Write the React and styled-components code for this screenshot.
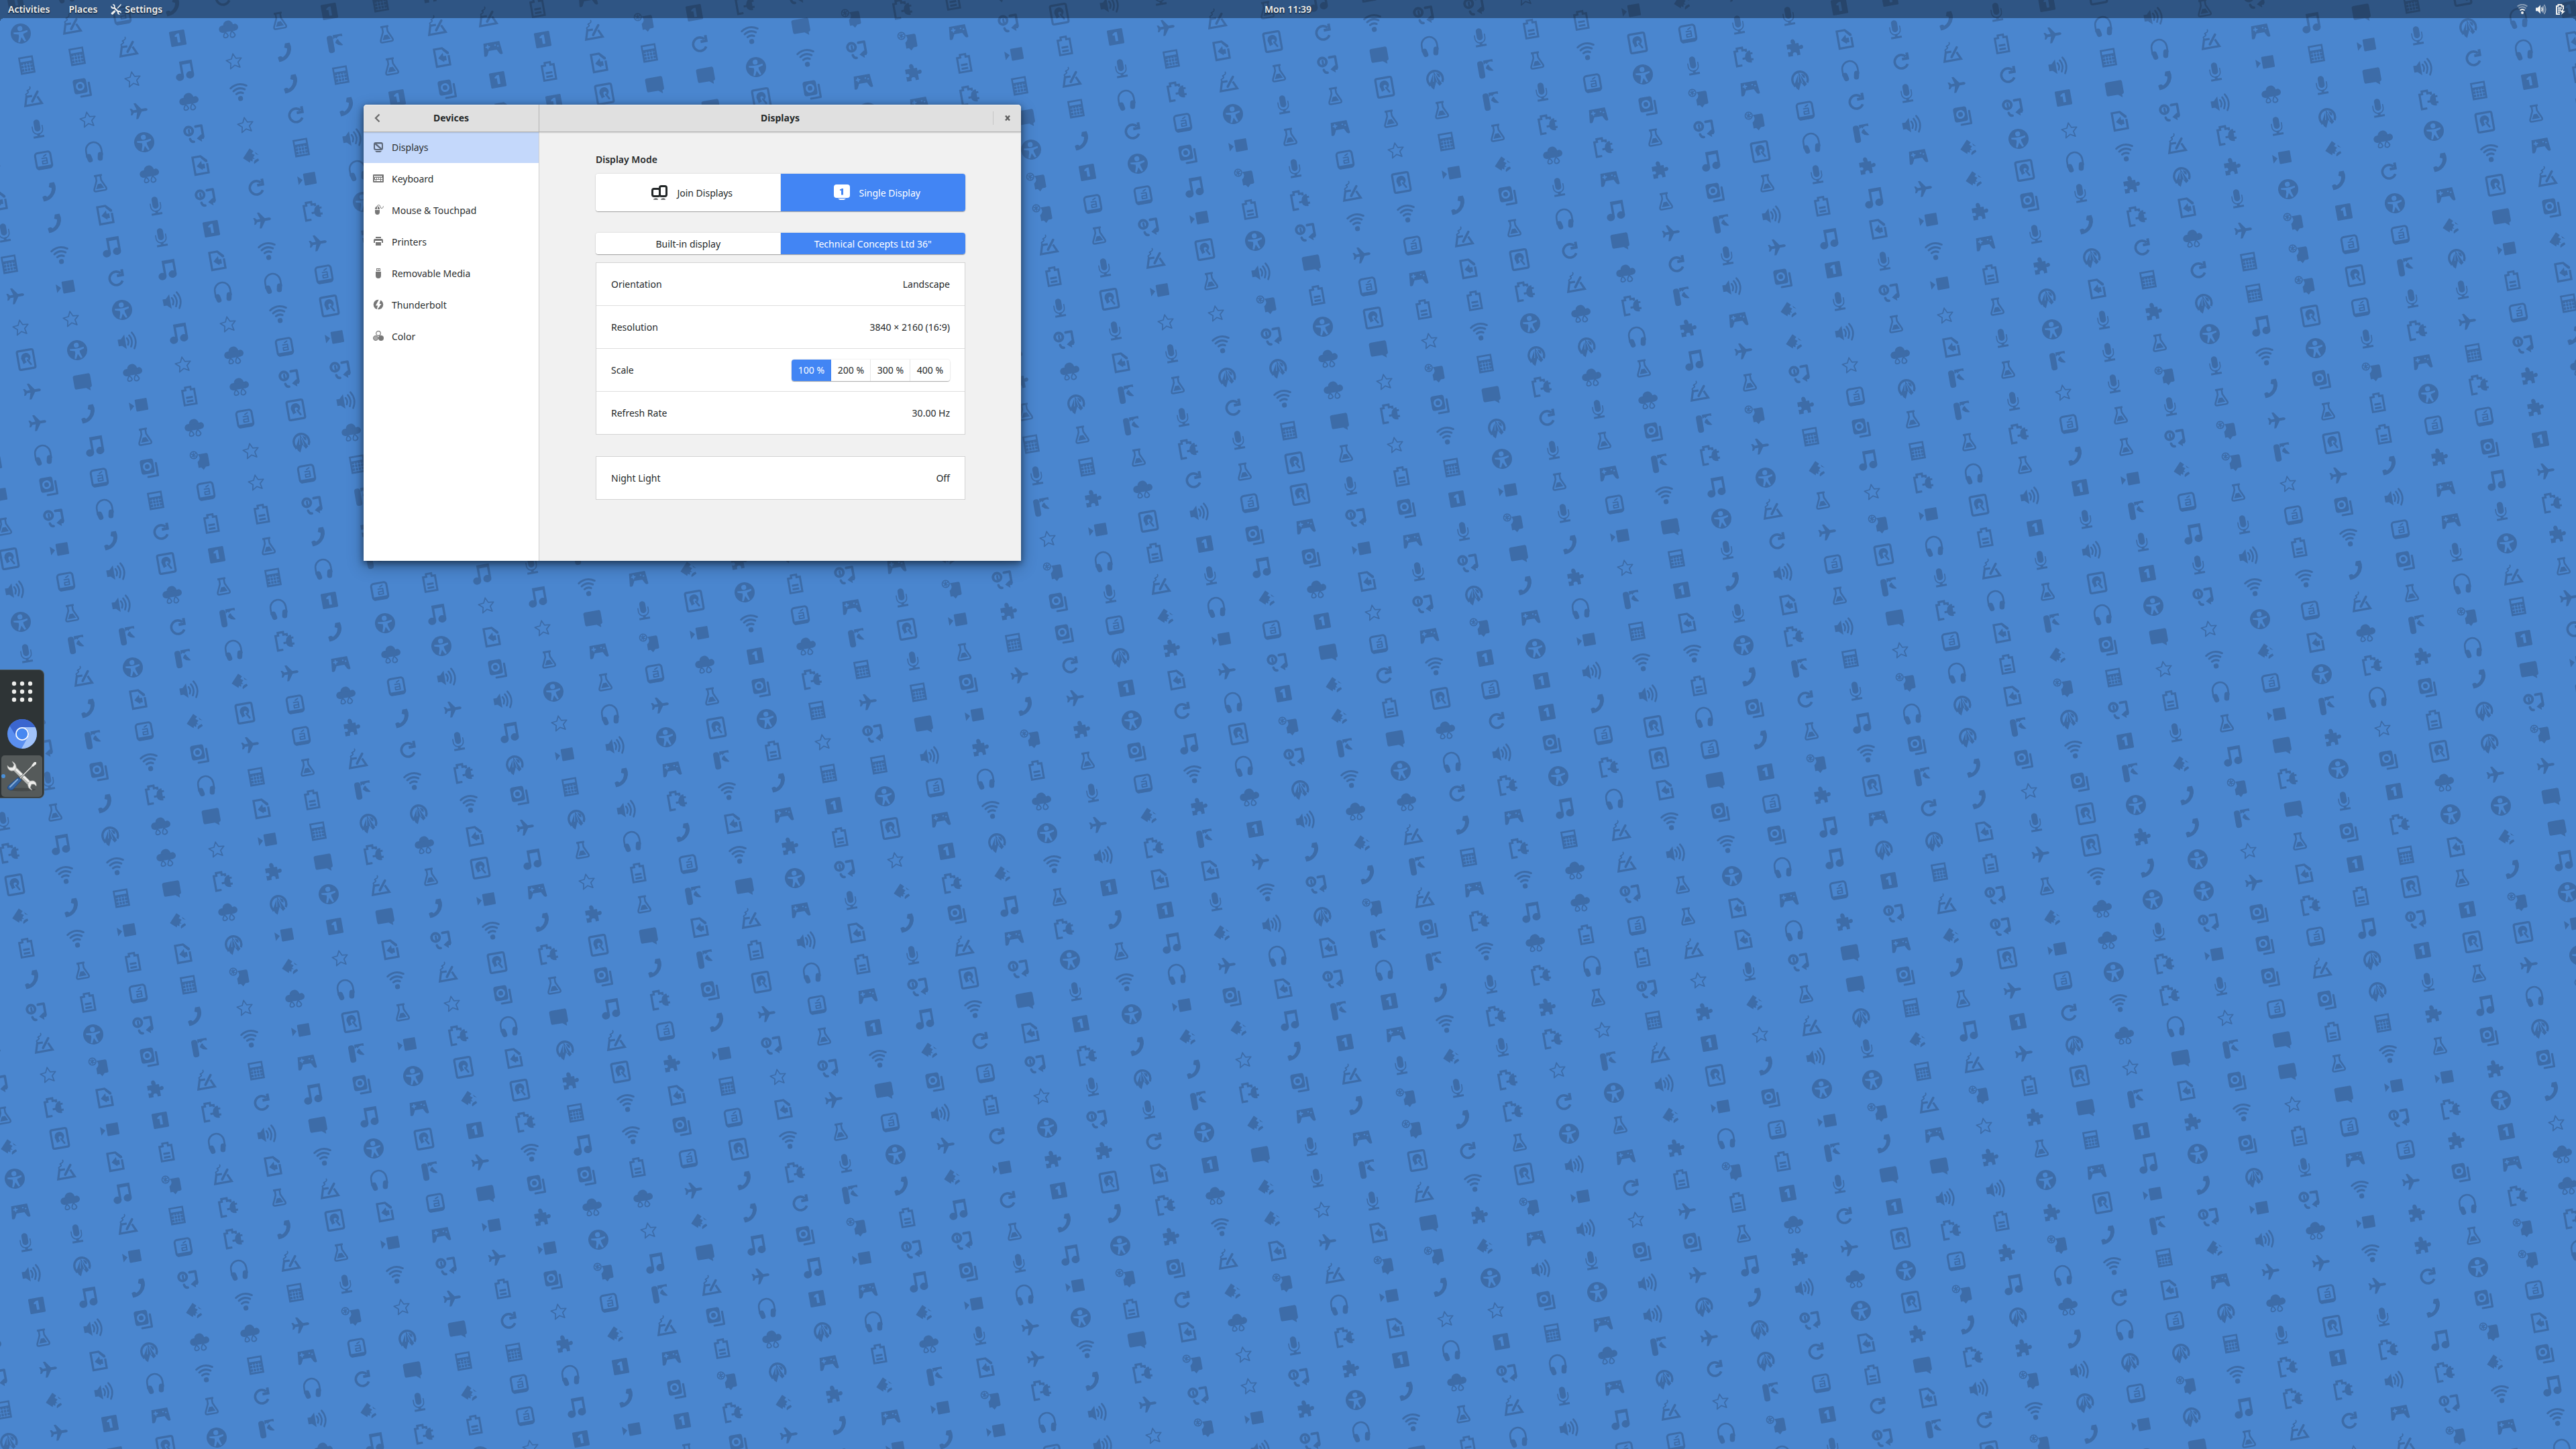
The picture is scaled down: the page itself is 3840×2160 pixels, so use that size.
import React from 'react';
import styled, { createGlobalStyle, css } from 'styled-components';

const font = '"Noto Sans", "Open Sans", sans-serif';

const GlobalStyle = createGlobalStyle`
  *, *::before, *::after { box-sizing: border-box; }
  body { margin: 0; background: #4a86cf; font-family: ${font}; font-size: 14px; color: #242829; }
  button { font: inherit; color: inherit; border: 0; background: none; padding: 0; margin: 0; cursor: pointer; }
`;

/* ---------- wallpaper ---------- */

const INK = '#3d6ca8';
const PAPER = '#4a86cf';

const line = (d, w = 2.5, c = INK) => (
  <path d={d} fill="none" stroke={c} strokeWidth={w} strokeLinejoin="round" strokeLinecap="round" />
);

const motifs = {
  1: (<><rect x="-11.500" y="-11.500" width="23" height="23" rx="1.500" /><path d="M-4 -4.500L0 -7H3V6.500H-1V-2.500H-4Z" fill={PAPER} /></>),
  m: (<><rect x="-4.500" y="-14" width="9" height="18" rx="4.500" />{line('M-7.500 -4V1A7.500 7 0 0 0 7.500 1V-4', 1.6)}<path d="M-2 7H2V10.500H8V13.500H-8V10.500H-2Z" /></>),
  h: (<>{line('M-11.500 6V-2A11.500 12 0 0 1 11.500 -2V6', 2.6)}<rect x="-12" y="2" width="7.500" height="13" rx="3.700" transform="rotate(-12 -8 8)" /><rect x="4.500" y="2" width="7.500" height="13" rx="3.700" transform="rotate(12 8 8)" /></>),
  r: (<><path d="M8 -6.500A10 10 0 1 0 9 5" fill="none" stroke={INK} strokeWidth="3.600" /><path d="M12.500 -12V-1.500H2V-5.500H8.500V-12Z" /></>),
  x: (<><circle r="15" /><circle cy="-7.500" r="3.700" fill={PAPER} /><path d="M-10.500 -3.500L-3 -2.500H3L10.500 -3.500V-1L3.500 1V4L6 12L3.500 12.500L0 5.500L-3.500 12.500L-6 12L-3.500 4V1L-10.500 -1Z" fill={PAPER} /></>),
  a: (<><rect x="-11.500" y="-12" width="23" height="24" rx="4" fill="none" stroke={INK} strokeWidth="3" /><path d="M-12 8H12L10 13H-10Z" />{line('M1 -6L5 -8M-2 -3H5V5H-2V1H5', 1.800)}</>),
  o: (<><circle cx="-8" cy="-5" r="6" fill="none" stroke={INK} strokeWidth="4" /><path d="M-9 -8H-6V-1H-9Z" />{line('M3 -10H12V7', 3.600)}<path d="M12.500 3V10H9V14L2 8L9 3Z" />{line('M-8 7Q-7 12 -3 12', 3.600)}</>),
  p: (<><path d="M0 -1H-8.500L-12.500 12H12.500L7.500 1" fill="none" stroke={INK} strokeWidth="3.200" />{line('M-1 7L9 -6', 3.600)}{line('M-8 -3C-12 -6 -2 -6 -5 -9C-9 -11 1 -10 -1 -15', 1.800)}</>),
  v: (<><rect x="-5" y="-9" width="18" height="18" rx="1.500" /><path d="M-14 -6.500L-7 0L-14 6.500Z" /></>),
  s: (<path d="M0 -11L3.400 -3.600L11.400 -2.800L5.400 2.600L7.200 10.500L0 6.300L-7.200 10.500L-5.400 2.600L-11.400 -2.800L-3.400 -3.600Z" fill="none" stroke={INK} strokeWidth="1.700" strokeLinejoin="round" />),
  f: (<><path d="M-3.500 -11V-4L-9 8Q-10 11.500 -7 11.500H7Q10 11.500 9 8L3.500 -4V-11" fill="none" stroke={INK} strokeWidth="2.500" /><path d="M-6 -13H6V-10H-6ZM-2.500 1H2.500L6 8H-6Z" /></>),
  c: (<><path d="M-4 13H-12V-9H-8V-13H0V-9H5V-6" fill="none" stroke={INK} strokeWidth="3.200" /><path d="M-2 2H2Q3 -5 9 -7H11V-4H14V-1H11V5H14V8H11V11H9Q3 10 2 5H-2Z" /></>),
  k: (<><path d="M-14 -5H-9L-3 -11V11L-9 5H-14Z" />{line('M0 -5Q3 0 0 5', 2.600)}{line('M4 -8.500Q9 0 4 8.500M8.500 -12Q16 0 8.500 12', 2.600)}</>),
  b: (<><path d="M-9 -9H-4V-13H4V-9H9V13H-9Z" fill="none" stroke={INK} strokeWidth="3" /><path d="M-5 1H5V4H-5ZM-5 6.500H5V9.500H-5Z" /></>),
  w: (<><circle cy="9" r="3.700" />{line('M-5 1.500Q0 -1.500 5 1.500', 3)}{line('M-8.500 -3.500Q0 -9 8.500 -3.500M-12 -8.500Q0 -16.500 12 -8.500', 3)}</>),
  d: (<><rect x="-12" y="-14" width="24" height="28" rx="2.500" fill="none" stroke={INK} strokeWidth="3.200" /><circle cy="-3" r="7" /><path d="M-7 -3L-5 6L0 4L2 -1Z" /><circle cx="1" cy="-1" r="2.400" fill={PAPER} />{line('M1 1L6 9', 4.600, PAPER)}{line('M2 1L6 8', 2.600)}</>),
  g: (<><path d="M6 -8L2 -13H-10V13H10V-1" fill="none" stroke={INK} strokeWidth="3.200" /><path d="M-6 1L2 -6V-1H6V6H2V8Z" /><path d="M4 -13L11 -6V-3H8L2 -10Z" /></>),
  t: (<><rect x="-11.500" y="-13" width="9" height="26" rx="4" /><path d="M-2 -13H12V-9L9 -10Q4 -10 3 -7L1 -9L-2 -7Z" /><path d="M0 -1Q2 -6 5 -6L6 -3L11 4Q5 5 0 -1Z" /></>),
  q: (<path d="M-10 -12H10Q13 -12 13 -9V6Q13 9 10 9V14L4 9H-10Q-13 9 -13 6V-9Q-13 -12 -10 -12Z" />),
  l: (<path d="M13 0Q13 2 10 2H4L-3 12H-6L-3 2H-8L-10.500 5H-13L-11.500 0L-13 -5H-10.500L-8 -2H-3L-6 -12H-3L4 -2H10Q13 -2 13 0Z" />),
  n: (<><ellipse cx="-7.500" cy="10" rx="6" ry="5.500" /><ellipse cx="8" cy="9" rx="6" ry="5.500" /><path d="M-5 10V-13H14V9H10.500V-8H-1.500V10Z" /></>),
  z: (<path d="M-11 -6H-3Q-5 -8 -4 -11Q-2 -14 1 -12Q3 -9 2 -6H7V-1Q12 -4 13 0Q13 5 7 3V12H2Q3 7 -1 7Q-5 7 -4 12H-11V5Q-6 7 -6 3Q-6 0 -11 1Z" />),
  u: (<><circle cy="-6" r="7.500" /><circle cx="-9" cy="-2" r="5.500" /><circle cx="9.500" cy="-2" r="5" /><rect x="-9" y="-6" width="18" height="9" /><path d="M-6 3Q-10 8 -9 10A4 4 0 0 0 -2.500 9Q-3 6 -6 3ZM4 3Q0 8 1 11A4 4 0 0 0 8 9Q7 6 4 3Z" fill={PAPER} stroke={INK} strokeWidth="1.800" /></>),
  j: (<><path d="M-12 -9H12L14 10Q11 12 9 9L6 3H-6L-9 9Q-11 12 -14 10Z" />{line('M-9 -3H-4M-6.500 -5.500V-0.500M4.500 -4H5M8.500 -2H9', 2, PAPER)}</>),
  e: (<path d="M3 -13H10Q14 -1 4 8Q-2 13 -10 13L-11 6Q-6 3 -4 7Q4 3 5 -5L1 -7Z" />),
  y: (<><path d="M-2 -8H11Q13 -8 13 -5V10Q13 12 10 12H7L3 16L0 12H-4V3Q3 -2 -2 -8Z" /><circle cx="-8" cy="-8" r="5.300" fill="none" stroke={INK} strokeWidth="1.600" />{line('M-8 -11.500V-4.500M-11 -10L-5 -6M-11 -6L-5 -10', 1.500)}</>),
  i: (<><rect x="-13" y="-14" width="20" height="22" rx="4" /><circle cx="-3" cy="-3" r="5" fill="none" stroke={PAPER} strokeWidth="3" />{line('M10.500 -6V12.500H-4', 3.200)}</>),
  C: (<><path fillRule="evenodd" d="M-11 -13H11V13H-11ZM-8.500 -10.500V-5.500H8.500V-10.500Z" /><path d="M-8.500 -0.500H8.500M-8.500 4.500H8.500M-8.500 9.500H8.500M-4.500 -3V10.500M0 -3V10.500M4.500 -3V10.500" stroke={PAPER} strokeWidth="1.100" fill="none" /></>),
  D: (<><path d="M0 -12L5 -7L2 -4L6 -1L3 2L5 5L2 4L1 8L-2 6L-3 9L-12 1Z" /><path d="M3 12Q2 6 10 5L11 8Z" /><path d="M7 -5L12 0L8 -2Z" /></>),
  R: (<><path d="M-9 8A11.500 12 0 1 1 10 7" fill="none" stroke={INK} strokeWidth="3.400" /><path d="M0 -10L9 9L5 12L1 5L-4 16L-7 13L-8 10L-11 10Z" />{line('M-1 -8L-3 4M1 -5L3 6', 1.200, PAPER)}<path d="M3 -8L8 -5L8 0L5 -2Z" /></>),
};

const names = Object.keys(motifs);

/* [column, first row, motif codes going down the column] */
const columns = [
  [-24, 18, 'mcdDbeopscd'],
  [-23, 18, 'fnwewfbxygv'],
  [-22, 18, 'eRwCvbaoiz1'],
  [-21, 19, 'uuqDgCetpch'],
  [-20, 19, 'qscuRyswCrk'],
  [-19, 19, 'gvzRvDuvjnq'],
  [-18, 20, 'Cqx1shdtin'],
  [-17, 20, 'Rcpqgwfvxjd'],
  [-16, 20, 'RufeopscdD'],
  [-3, 12, 'Cmtsyi'],
  [-2, 3, 'xyypbmouRfCzvhm'],
  [-1, -1, 'dbpCe1afmdmgttfudbp'],
  [0, -1, 'k1mhrxaopvsmfmcrk1mh'],
  [1, -1, 'mlCcainvdfswRrmfainD'],
  [2, 0, 'pgpxvybxkyoRwCddjiu'],
  [3, 0, 'fdfmfmcoqbxuuqfmovgs'],
  [4, 0, 'nrofjapwladqscsbijmo'],
  [5, 0, 'bwqdfsdwajbsyiwC1moR'],
  [6, 1, 'ohRfCvepgbwCqRxvyqe'],
  [7, 1, 'omttfDifdcxRcrmfmezh'],
  [8, 1, 'sbfmcumhrpuRumfjavst'],
  [9, 2, 'bwajcjnquchfuitwqC1'],
  [10, 2, 'vdxifzflrtznptcnxme'],
  [11, 2, 'Damyonitmkjlfylxprkg'],
  [12, 3, 'mcjydfkliDDozCDflaf'],
  [13, 3, 'mzRahmbn1mksainsydt'],
  [14, 3, '1ghrtzngmofuRfCcvhmc'],
  [15, 3, '1mrmkjlvwvsgttfhdbph'],
  [16, 4, 'epliDDzjbfmfmcfk1mf'],
  [17, 4, 'mbroxdimzRxtsae1mkd'],
  [18, 4, '1lk1shmeRgmmmffvtm1x'],
  [19, 4, 'dhCqgwzcrCzfymoDanmo'],
  [20, 5, 'kheopRgurRxmfyyfmkw'],
  [21, 5, 'fpmkczmlCCnweltsabwa'],
  [22, 5, 'ojvumvxyyydxifdliwep'],
  [23, 6, 'nCmRDe1adamybbekaif'],
  [24, 6, 'qvqmurxatmcjxazjjmh'],
  [25, 6, 'CmkcxejDRmlCcainmxp'],
  [26, 6, 'dRrCdwdqvbaozz1lczfl'],
  [27, 7, 'hh1fjpiDgCeu'],
  [28, 7, '1gb'],
];
const known = new Map(columns.map(([col, row, codes]) => [col, { row, codes }]));

function motifAt(i, j) {
  const column = known.get(i);
  const code = column && column.codes[j - column.row];
  if (code) return code;
  let n = Math.imul(i + 101, 374761393) + Math.imul(j + 57, 668265263);
  n = Math.imul(n ^ (n >>> 13), 1274126177);
  return names[((n ^ (n >>> 16)) >>> 0) % names.length];
}

const cells = [];
for (let i = -27; i <= 29; i += 1) {
  for (let j = -8; j <= 52; j += 1) {
    const x = 1662.5 + 75.3 * i + 8.335 * j;
    const y = 54.5 - 13.28 * i + 47.27 * j;
    if (x > -20 && x < 3860 && y > -20 && y < 2180) {
      cells.push({ x: Math.round(x), y: Math.round(y), code: motifAt(i, j) });
    }
  }
}

const Backdrop = styled.svg`
  position: absolute;
  inset: 0;
  width: 100%;
  height: 100%;
`;

function Wallpaper() {
  return (
    <Backdrop viewBox="0 0 3840 2160" preserveAspectRatio="xMinYMin slice" aria-hidden="true">
      <defs>
        {names.map((name) => (
          <g key={name} id={`motif-${name}`} fill={INK}>{motifs[name]}</g>
        ))}
      </defs>
      <rect width="3840" height="2160" fill={PAPER} />
      {cells.map((c) => (
        <use key={`${c.x}-${c.y}`} href={`#motif-${c.code}`} transform={`translate(${c.x} ${c.y}) rotate(-10)`} />
      ))}
    </Backdrop>
  );
}

/* ---------- shell ---------- */

const Desktop = styled.div`
  position: relative;
  display: flex;
  flex-direction: column;
  min-height: 100vh;
  overflow: hidden;
`;

const TopBar = styled.header`
  position: relative;
  display: grid;
  grid-template-columns: 1fr auto 1fr;
  align-items: center;
  height: 27px;
  padding: 0 12px;
  background: rgba(0, 0, 0, 0.36);
  color: #f2f2f0;
  font-weight: 600;
  text-shadow: 0 1px 2px rgba(0, 0, 0, 0.8);

  &::before, &::after {
    content: "";
    position: absolute;
    top: 100%;
    width: 6px;
    height: 6px;
  }
  &::before {
    left: 0;
    background: radial-gradient(circle at 100% 100%, transparent 6px, rgba(0, 0, 0, 0.36) 6px);
  }
  &::after {
    right: 0;
    background: radial-gradient(circle at 0 100%, transparent 6px, rgba(0, 0, 0, 0.36) 6px);
  }
`;

const BarGroup = styled.div`
  display: flex;
  align-items: center;
  gap: ${(p) => p.$gap}px;
  justify-content: ${(p) => (p.$end ? 'flex-end' : 'flex-start')};
  padding-right: ${(p) => (p.$end ? 4 : 0)}px;
`;

const BarButton = styled.button`
  display: flex;
  align-items: center;
  gap: 5px;
  line-height: 27px;
  text-shadow: inherit;
`;

const Workspace = styled.main`
  position: relative;
  flex: 1;
  display: flex;
  align-items: center;
`;

const Dock = styled.nav`
  display: flex;
  flex-direction: column;
  width: 66px;
  padding: 1px 2px 1px 0;
  background: #2e3436;
  border: 1px solid #4d5658;
  border-left: 0;
  border-radius: 0 8px 8px 0;
`;

const DockItem = styled.button`
  position: relative;
  display: flex;
  justify-content: center;
  align-items: center;
  height: ${(p) => (p.$active ? 62 : 63)}px;
  margin-left: 2px;
  border-radius: 5px;
  background: ${(p) => (p.$active ? '#555a5a' : 'transparent')};
`;

const RunningDot = styled.span`
  position: absolute;
  left: 0;
  width: 6px;
  height: 6px;
  border-radius: 50%;
  background: #4a90d9;
`;

/* ---------- settings window ---------- */

const Window = styled.section`
  position: absolute;
  left: 542px;
  top: 129px;
  display: grid;
  grid-template-columns: 262px 718px;
  grid-template-rows: 41px auto;
  border-radius: 5px 5px 0 0;
  background: #f1f1f1;
  box-shadow: 0 3px 10px 1px rgba(0, 0, 0, 0.4), 0 8px 24px rgba(0, 0, 0, 0.3);
`;

const Header = styled.div`
  display: grid;
  grid-template-columns: 42px 1fr 42px;
  align-items: center;
  background: #e0e0e0;
  border-bottom: 1px solid #b3b3b3;
  border-right: ${(p) => (p.$side ? '1px solid #bdbdbd' : '0')};
  border-radius: ${(p) => (p.$side ? '5px 0 0 0' : '0 5px 0 0')};
  box-shadow: inset 0 1px #f0f0f0, 0 1px 2px rgba(0, 0, 0, 0.15);
  z-index: 1;
`;

const Title = styled.h1`
  grid-column: 2;
  margin: 0;
  font-size: 14px;
  line-height: 20px;
  font-weight: 700;
  text-align: center;
`;

const HeaderButton = styled.button`
  display: flex;
  align-items: center;
  justify-content: center;
  height: 20px;
  border-left: ${(p) => (p.$divided ? '1px solid #c6c6c6' : '0')};
`;

const Sidebar = styled.nav`
  display: flex;
  flex-direction: column;
  gap: 1px;
  background: #fff;
  border-right: 1px solid #cfcfcf;
`;

const SideLink = styled.a`
  display: flex;
  align-items: center;
  gap: 12px;
  height: 46px;
  padding: 0 0 2px 14px;
  color: #2b2f30;
  text-decoration: none;
  background: ${(p) => (p.$active ? '#c4d8fb' : 'transparent')};
  svg { color: ${(p) => (p.$active ? '#5e6879' : '#777')}; }
`;

const Content = styled.div`
  display: flex;
  flex-direction: column;
  padding: 31px 83px 91px 84px;
`;

const SectionTitle = styled.h2`
  margin: 0 0 11px;
  font-size: 14px;
  line-height: 20px;
  font-weight: 600;
`;

const Segments = styled.div`
  display: grid;
  grid-auto-flow: column;
  grid-auto-columns: 1fr;
  height: ${(p) => (p.$tall ? 56 : 32)}px;
  margin-bottom: ${(p) => p.$after || 0}px;
  width: ${(p) => (p.$compact ? '236px' : 'auto')};
  border-radius: 4px;
  background: #fff;
  box-shadow: 0 1px 1px rgba(0, 0, 0, 0.3), 0 0 2px rgba(0, 0, 0, 0.18);
  overflow: hidden;
`;

const Segment = styled.button`
  display: flex;
  align-items: center;
  justify-content: center;
  gap: 14px;
  background: ${(p) => (p.$on ? '#4285f4' : '#fff')};
  color: ${(p) => (p.$on ? '#fff' : 'inherit')};
  box-shadow: ${(p) => (p.$on ? 'none' : 'inset -1px 0 #e6e6e6')};
  &:last-child { box-shadow: none; }
  svg { margin-left: 12px; }
`;

const Card = styled.div`
  border: 1px solid #d3d3d3;
  background: #fff;
  margin-bottom: ${(p) => p.$after || 0}px;
`;

const rowStyle = css`
  display: flex;
  align-items: center;
  justify-content: space-between;
  width: 100%;
  height: 64px;
  padding: 0 22px;
  border-top: 1px solid #dedede;
  &:first-child { height: 63px; border-top: 0; }
`;

const Row = styled.button`
  ${rowStyle}
`;

const StaticRow = styled.div`
  ${rowStyle}
`;

/* ---------- icons ---------- */

const Glyph = ({ size = 16, box = 16, children }) => (
  <svg width={size} height={size} viewBox={`0 0 ${box} ${box}`} fill="currentColor" aria-hidden="true">{children}</svg>
);

const icons = {
  displays: <Glyph><path fillRule="evenodd" d="M4 1H12Q15 1 15 4V10Q15 13 12 13H4Q1 13 1 10V4Q1 1 4 1ZM5.500 3.500L13 10V4.500Q13 3.500 12 3.500ZM3 4.500V9.500Q3 11 4.500 11H10.500Z" /><path d="M3 14H13L11 16H5Z" /></Glyph>,
  keyboard: <Glyph><path fillRule="evenodd" d="M1 2H15Q16 2 16 3V13Q16 14 15 14H1Q0 14 0 13V3Q0 2 1 2ZM2 4V6H4V4ZM5 4V6H7V4ZM8 4V6H10V4ZM11 4V6H13V4ZM3 7V9H5V7ZM6 7V9H8V7ZM9 7V9H11V7ZM12 7V9H14V7ZM2 10V12H4V10ZM5 10V12H11V10ZM12 10V12H14V10Z" /></Glyph>,
  mouse: <Glyph><path d="M3 7Q3 3 6 2.500V7ZM7 2.500Q10 3 10 7H7ZM3 8H10V11Q10 15 6.500 15Q3 15 3 11Z" /><path d="M6.500 3Q6.500 0.500 8.500 0.500Q10.500 0.500 11 3.500Q11.500 6 13.500 5.500Q15 5 15.500 2.500" fill="none" stroke="currentColor" /></Glyph>,
  printers: <Glyph><path d="M4 1H12V3H4ZM3 4H13Q15 4 15 6V10H13V7H3V10H1V6Q1 4 3 4ZM4 9H12V14H4Z" /></Glyph>,
  media: <Glyph><path fillRule="evenodd" d="M5 1H11V5H5ZM6 2V4H7.500V2ZM8.500 2V4H10V2ZM4 6H12V12Q12 16 8 16Q4 16 4 12Z" /></Glyph>,
  thunderbolt: <Glyph><circle cx="8" cy="8" r="7.300" /><path d="M9.500 -1L4 9.500H7L5.500 17L12.500 7H9.500L12 -1Z" fill="#fff" /></Glyph>,
  color: <Glyph><circle cx="8" cy="4" r="3.300" fill="none" stroke="currentColor" strokeWidth="1.200" /><circle cx="4" cy="11" r="3.500" fill="#aaa" stroke="currentColor" /><circle cx="12" cy="11" r="4" /></Glyph>,
  back: <Glyph><path d="M10.500 2.500L5 8L10.500 13.500" fill="none" stroke="#6b6b6b" strokeWidth="2.300" /></Glyph>,
  close: <Glyph><path d="M5 4.500L11 11.500M11 4.500L5 11.500" fill="none" stroke="#5e5e5e" strokeWidth="2.400" /></Glyph>,
  join: <Glyph size={24} box={24}><rect x="1.500" y="6.500" width="11" height="11" rx="2.500" fill="none" stroke="currentColor" strokeWidth="3" /><rect x="12.500" y="2.500" width="10" height="15" rx="2.500" fill="none" stroke="currentColor" strokeWidth="3" /><path d="M3 22Q7 19.500 10 22V22.500H3ZM14 22Q18 19.500 21 22V22.500H14Z" /></Glyph>,
  single: <Glyph size={24} box={24}><rect y="0" width="24" height="20" rx="4" /><path d="M6 21H18L15 23H9Z" /><path d="M9 7.500L12 6H14V15.500H11V9H9Z" fill="#4285f4" /></Glyph>,
  tools: <Glyph><path d="M2.500 0.500L5 3V5H3L0.500 2.500Q-0.500 6 2.500 7Q4 7.500 5 7L10 12Q9.500 14.500 11.500 15.500Q13 16 14 15.500L12 13.500V12H13.500L15.500 14Q16.300 11.500 14.500 10.300Q13 9.500 11.500 10L6.500 5Q7.300 1 4.500 0.300Z" /><path d="M15 0L16 1L10.500 7L9.500 6ZM1 13L5.500 9L7.500 11L3.500 15.500Q2 16 1 15Q0 14 1 13Z" /></Glyph>,
  wifi: <Glyph><circle cx="8" cy="13" r="2" /><path d="M4.500 9.500Q8 6.500 11.500 9.500" fill="none" stroke="currentColor" strokeWidth="2" /><path d="M2.500 6.500Q8 2 13.500 6.500M0.500 3.500Q8 -2 15.500 3.500" fill="none" stroke="currentColor" strokeWidth="2" opacity="0.450" /></Glyph>,
  volume: <Glyph><path d="M0 5.500H3L7 1.500V14.500L3 10.500H0Z" /><path d="M9 5Q10.500 8 9 11" fill="none" stroke="currentColor" strokeWidth="2" /><path d="M10.500 3Q13.500 8 10.500 13M12.500 1Q17 8 12.500 15" fill="none" stroke="currentColor" strokeWidth="1.700" opacity="0.500" /></Glyph>,
  battery: <Glyph><path d="M8 15H3V3H5.500V1H10.500V3H13V8" fill="none" stroke="currentColor" strokeWidth="2" /><path d="M5 5H11V7H5ZM5 8H10V10H5ZM5 11H8V13H5ZM13 7L8 12H11L10 16L16 10.500H13Z" /></Glyph>,
};

const AppsIcon = () => (
  <svg width="32" height="32" viewBox="0 0 32 32" fill="#eeeeec" aria-hidden="true">
    {[4, 16, 28].map((y) => [4, 16, 28].map((x) => <circle key={`${x}-${y}`} cx={x} cy={y} r="3.200" />))}
  </svg>
);

const ChromiumIcon = () => (
  <svg width="44" height="44" viewBox="0 0 44 44" aria-hidden="true">
    <circle cx="22" cy="22" r="22" fill="#5a8ff0" />
    <path d="M3.500 10A22 22 0 0 1 41.500 12H22A10 10 0 0 0 13 17.500L12.500 25Z" fill="#3b66cf" />
    <path d="M41.500 12A22 22 0 0 1 21 44L31 26A10 10 0 0 0 29 14.500L22 12Z" fill="#a1c3fa" />
    <circle cx="22" cy="22" r="10" fill="#fff" />
    <circle cx="22" cy="22" r="8.200" fill="#4688f1" />
  </svg>
);

const ToolsIcon = () => (
  <svg width="48" height="48" viewBox="0 0 48 48" aria-hidden="true">
    <ellipse cx="24" cy="44" rx="20" ry="2.500" fill="#000" opacity="0.180" />
    <path d="M11 11L37 37" stroke="#b9bbb8" strokeWidth="6.500" />
    <path d="M13 12L37 35" stroke="#f1f1ef" strokeWidth="3" />
    <path d="M9 2L12 7L10 11L5 11L2 8Q2 14 7 16Q12 17 15 13Q16 5 9 2Z" fill="#eeeeec" stroke="#a0a29f" strokeWidth="0.800" />
    <path d="M39 45L36 41L38 36L42 36L45 39Q46 33 41 31Q36 30 33 34Q31 42 39 45Z" fill="#eeeeec" stroke="#a0a29f" strokeWidth="0.800" />
    <path d="M21 27L40 8" stroke="#55585a" strokeWidth="3" />
    <path d="M21 27L40 8" stroke="#e0e1de" strokeWidth="1.500" />
    <path d="M38 8L42 3L45 3L45 6L40 10Z" fill="#eeeeec" />
    <path d="M18 26L23 30L10 44Q6 46 3 43Q1 41 4 38Z" fill="#3465a4" stroke="#204a87" />
    <path d="M17 29L6 40" stroke="#85add8" strokeWidth="2" strokeLinecap="round" />
  </svg>
);

/* ---------- page ---------- */

const devices = [
  ['Displays', 'displays'],
  ['Keyboard', 'keyboard'],
  ['Mouse & Touchpad', 'mouse'],
  ['Printers', 'printers'],
  ['Removable Media', 'media'],
  ['Thunderbolt', 'thunderbolt'],
  ['Color', 'color'],
];

export default function App() {
  return (
    <Desktop>
      <GlobalStyle />
      <Wallpaper />
      <TopBar>
        <BarGroup $gap={28}>
          <BarButton>Activities</BarButton>
          <BarGroup $gap={20}>
            <BarButton>Places</BarButton>
            <BarButton>{icons.tools}Settings</BarButton>
          </BarGroup>
        </BarGroup>
        <BarButton>Mon 11:39</BarButton>
        <BarGroup $gap={12} $end>
          {icons.wifi}
          {icons.volume}
          {icons.battery}
        </BarGroup>
      </TopBar>
      <Workspace>
        <Dock aria-label="Dock">
          <DockItem aria-label="Show applications"><AppsIcon /></DockItem>
          <DockItem aria-label="Chromium"><ChromiumIcon /></DockItem>
          <DockItem aria-label="Settings" $active><RunningDot /><ToolsIcon /></DockItem>
        </Dock>
        <Window aria-label="Settings">
          <Header $side>
            <HeaderButton aria-label="Back">{icons.back}</HeaderButton>
            <Title>Devices</Title>
          </Header>
          <Header>
            <Title>Displays</Title>
            <HeaderButton aria-label="Close" $divided>{icons.close}</HeaderButton>
          </Header>
          <Sidebar aria-label="Devices">
            {devices.map(([label, icon], index) => (
              <SideLink key={label} href={`#${icon}`} $active={index === 0}>
                {icons[icon]}
                {label}
              </SideLink>
            ))}
          </Sidebar>
          <Content>
            <SectionTitle>Display Mode</SectionTitle>
            <Segments $tall $after={32}>
              <Segment aria-pressed="false">{icons.join}Join Displays</Segment>
              <Segment aria-pressed="true" $on>{icons.single}Single Display</Segment>
            </Segments>
            <Segments $after={12}>
              <Segment aria-pressed="false">Built-in display</Segment>
              <Segment aria-pressed="true" $on>Technical Concepts Ltd 36"</Segment>
            </Segments>
            <Card $after={32}>
              <Row><span>Orientation</span><span>Landscape</span></Row>
              <Row><span>Resolution</span><span>3840 × 2160 (16∶9)</span></Row>
              <StaticRow>
                <span>Scale</span>
                <Segments $compact>
                  <Segment aria-pressed="true" $on>100 %</Segment>
                  <Segment aria-pressed="false">200 %</Segment>
                  <Segment aria-pressed="false">300 %</Segment>
                  <Segment aria-pressed="false">400 %</Segment>
                </Segments>
              </StaticRow>
              <Row><span>Refresh Rate</span><span>30.00 Hz</span></Row>
            </Card>
            <Card>
              <Row><span>Night Light</span><span>Off</span></Row>
            </Card>
          </Content>
        </Window>
      </Workspace>
    </Desktop>
  );
}
